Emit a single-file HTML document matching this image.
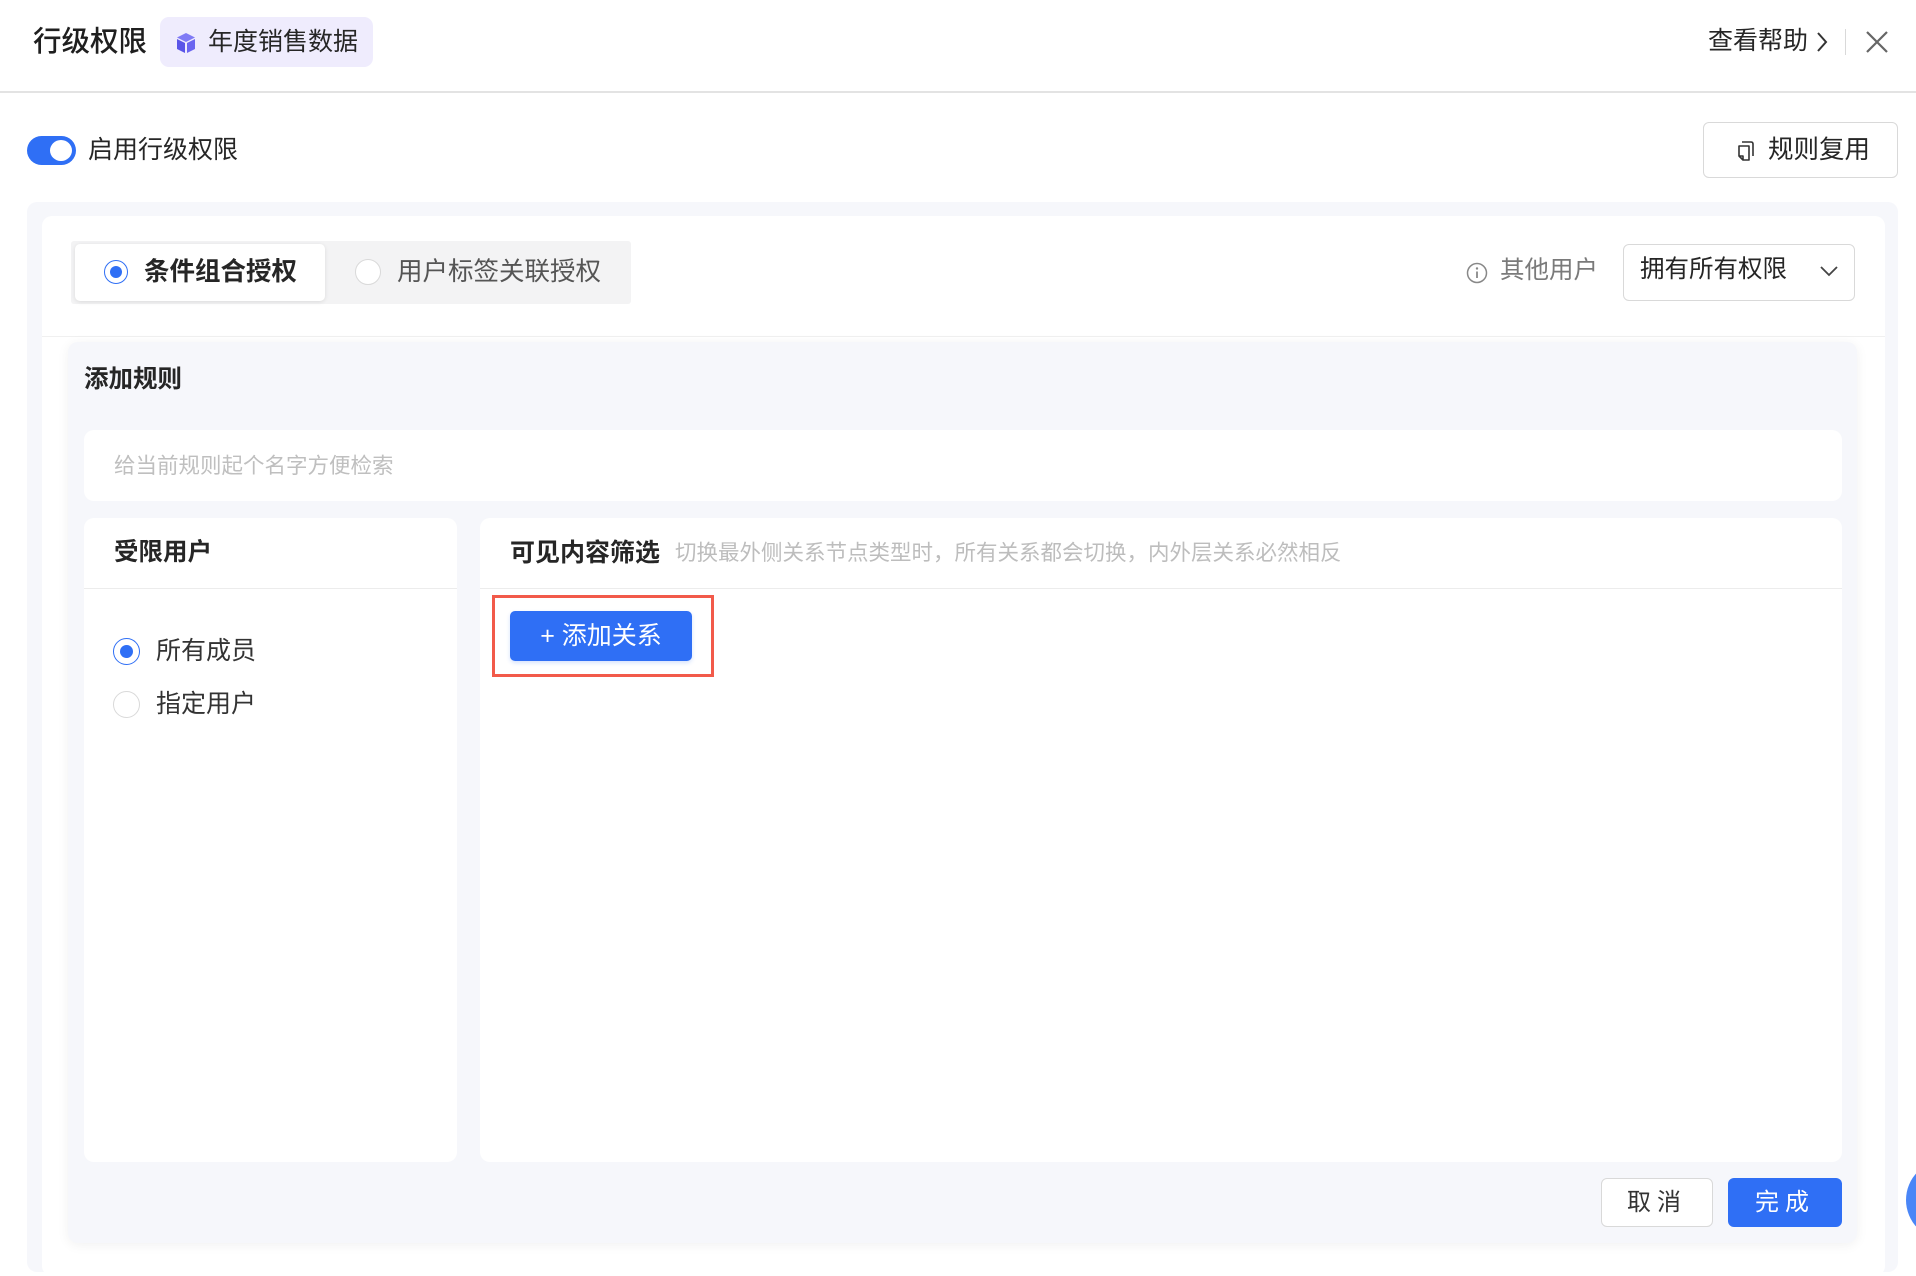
<!DOCTYPE html>
<html><head><meta charset="utf-8">
<style>
*{box-sizing:border-box;margin:0;padding:0}
body{width:1916px;height:1262px;background:#fff;font-family:"Liberation Sans","Noto Sans CJK SC",sans-serif;color:#1f1f1f;position:relative;overflow:hidden}
.a{position:absolute}
.t{white-space:nowrap}
</style></head><body>
<!-- header -->
<div class="a t" style="left:33px;top:23px;font-size:28.5px;font-weight:500;color:#1f1f1f;line-height:38px">行级权限</div>
<div class="a" style="left:160px;top:17px;width:213px;height:50px;background:#efecfd;border-radius:9px"></div>
<svg class="a" style="left:175px;top:32px" width="22" height="22" viewBox="0 0 22 22"><path d="M11 1 L20 5.5 L11 10 L2 5.5Z" fill="#7f7af5"/><path d="M2 7 L10 11 V21 L2 17Z" fill="#5a55e8"/><path d="M20 7 L12 11 V21 L20 17Z" fill="#6b66f0"/></svg>
<div class="a t" style="left:208px;top:25px;font-size:25px;line-height:34px;color:#262626">年度销售数据</div>
<div class="a t" style="left:1708px;top:24px;font-size:25px;line-height:34px;color:#262626">查看帮助</div>
<svg class="a" style="left:1815px;top:31px" width="14" height="22" viewBox="0 0 14 22"><path d="M3 2 L11 11 L3 20" fill="none" stroke="#333" stroke-width="2"/></svg>
<div class="a" style="left:1845px;top:29px;width:1px;height:26px;background:#d9d9d9"></div>
<svg class="a" style="left:1865px;top:30px" width="24" height="24" viewBox="0 0 24 24"><path d="M2 2 L22 22 M22 2 L2 22" stroke="#666" stroke-width="2.2"/></svg>
<div class="a" style="left:0;top:91px;width:1916px;height:2px;background:#e3e3e3"></div>
<!-- toggle -->
<div class="a" style="left:27px;top:136px;width:49px;height:29px;background:#2f6ff5;border-radius:15px"></div>
<div class="a" style="left:50px;top:140px;width:22px;height:21px;background:#fff;border-radius:50%"></div>
<div class="a t" style="left:88px;top:133px;font-size:25px;line-height:34px;color:#262626">启用行级权限</div>
<div class="a" style="left:1703px;top:122px;width:195px;height:56px;border:1px solid #d9d9d9;border-radius:6px;background:#fff"></div>
<svg class="a" style="left:1736px;top:140px" width="20" height="22" viewBox="0 0 20 22"><path d="M6 2 H15 Q17 2 17 4 V16" fill="none" stroke="#333" stroke-width="1.6"/><path d="M3 6 H13 V20 H7 L3 16Z M3 16 H7 V20" fill="none" stroke="#333" stroke-width="1.6" stroke-linejoin="round"/></svg>
<div class="a t" style="left:1768px;top:133px;font-size:25.5px;line-height:34px;color:#262626">规则复用</div>
<!-- outer -->
<div class="a" style="left:27px;top:202px;width:1871px;height:1070px;background:#f6f7fb;border-radius:10px"></div>
<div class="a" style="left:42px;top:216px;width:1843px;height:1060px;background:#fff;border-radius:10px"></div>
<div class="a" style="left:42px;top:336px;width:1843px;height:1px;background:#f0f0f0"></div>
<!-- segmented -->
<div class="a" style="left:71px;top:241px;width:560px;height:63px;background:#f3f3f4;border-radius:3px"></div>
<div class="a" style="left:75px;top:244px;width:250px;height:57px;background:#fff;border-radius:5px;box-shadow:0 1px 4px rgba(0,0,0,.1)"></div>
<div class="a" style="left:104px;top:260px;width:24px;height:24px;border:1.5px solid #2f6ff5;border-radius:50%"></div>
<div class="a" style="left:110px;top:266px;width:12px;height:12px;background:#2f6ff5;border-radius:50%"></div>
<div class="a t" style="left:144px;top:255px;font-size:25.5px;font-weight:700;line-height:34px;color:#262626">条件组合授权</div>
<div class="a" style="left:355px;top:259px;width:26px;height:26px;border:1.5px solid #d9d9d9;border-radius:50%;background:#fff"></div>
<div class="a t" style="left:397px;top:255px;font-size:25.5px;line-height:34px;color:#555">用户标签关联授权</div>
<svg class="a" style="left:1466px;top:262px" width="22" height="22" viewBox="0 0 22 22"><circle cx="11" cy="11" r="9.5" fill="none" stroke="#888" stroke-width="1.5"/><circle cx="11" cy="6.5" r="1.2" fill="#888"/><path d="M11 9.5 V16" stroke="#888" stroke-width="1.8"/></svg>
<div class="a t" style="left:1500px;top:254px;font-size:24.5px;line-height:34px;color:#7a7a7a">其他用户</div>
<div class="a" style="left:1623px;top:244px;width:232px;height:57px;border:1px solid #d9d9d9;border-radius:6px;background:#fff"></div>
<div class="a t" style="left:1640px;top:253px;font-size:24.5px;line-height:34px;color:#262626">拥有所有权限</div>
<svg class="a" style="left:1819px;top:264px" width="20" height="14" viewBox="0 0 20 14"><path d="M2 3 L10 11 L18 3" fill="none" stroke="#444" stroke-width="1.8"/></svg>
<!-- rule panel -->
<div class="a" style="left:68px;top:342px;width:1789px;height:901px;background:#f6f7fb;border-radius:10px;box-shadow:0 2px 12px rgba(0,0,0,.06)"></div>
<div class="a t" style="left:84px;top:363px;font-size:24.5px;font-weight:700;line-height:34px;color:#262626">添加规则</div>
<div class="a" style="left:84px;top:430px;width:1758px;height:71px;background:#fff;border-radius:10px"></div>
<div class="a t" style="left:114px;top:451px;font-size:21.5px;line-height:30px;color:#bfbfbf">给当前规则起个名字方便检索</div>
<div class="a" style="left:84px;top:518px;width:373px;height:644px;background:#fff;border-radius:10px"></div>
<div class="a" style="left:84px;top:588px;width:373px;height:1px;background:#ececec"></div>
<div class="a t" style="left:114px;top:536px;font-size:24.5px;font-weight:700;line-height:34px;color:#262626">受限用户</div>
<div class="a" style="left:113px;top:638px;width:27px;height:27px;border:1.5px solid #2f6ff5;border-radius:50%"></div>
<div class="a" style="left:120px;top:645px;width:13px;height:13px;background:#2f6ff5;border-radius:50%"></div>
<div class="a t" style="left:156px;top:634px;font-size:25px;line-height:34px;color:#333">所有成员</div>
<div class="a" style="left:113px;top:691px;width:27px;height:27px;border:1.5px solid #d9d9d9;border-radius:50%"></div>
<div class="a t" style="left:156px;top:687px;font-size:25px;line-height:34px;color:#333">指定用户</div>
<div class="a" style="left:480px;top:518px;width:1362px;height:644px;background:#fff;border-radius:10px"></div>
<div class="a" style="left:480px;top:588px;width:1362px;height:1px;background:#ececec"></div>
<div class="a t" style="left:510px;top:536px;font-size:25px;font-weight:700;line-height:34px;color:#262626">可见内容筛选</div>
<div class="a t" style="left:675px;top:538px;font-size:21.5px;line-height:30px;color:#bdbdbd">切换最外侧关系节点类型时，所有关系都会切换，内外层关系必然相反</div>
<div class="a" style="left:492px;top:595px;width:222px;height:82px;border:3px solid #f25a4a"></div>
<div class="a t" style="left:510px;top:611px;width:182px;height:50px;background:#2f6ff5;border-radius:5px;color:#fff;font-size:25px;line-height:50px;text-align:center;box-shadow:0 2px 4px rgba(47,111,245,.2)">+ 添加关系</div>
<div class="a t" style="left:1601px;top:1178px;width:112px;height:49px;border:1px solid #d9d9d9;border-radius:6px;background:#fff;text-align:center;font-size:24px;line-height:47px;color:#333;letter-spacing:6px">取消</div>
<div class="a t" style="left:1728px;top:1178px;width:114px;height:49px;border-radius:6px;background:#2f6ff5;text-align:center;font-size:24px;line-height:49px;color:#fff;letter-spacing:6px">完成</div>
<div class="a" style="left:1906px;top:1160px;width:80px;height:80px;border-radius:50%;background:#4a86f7"></div>
</body></html>
